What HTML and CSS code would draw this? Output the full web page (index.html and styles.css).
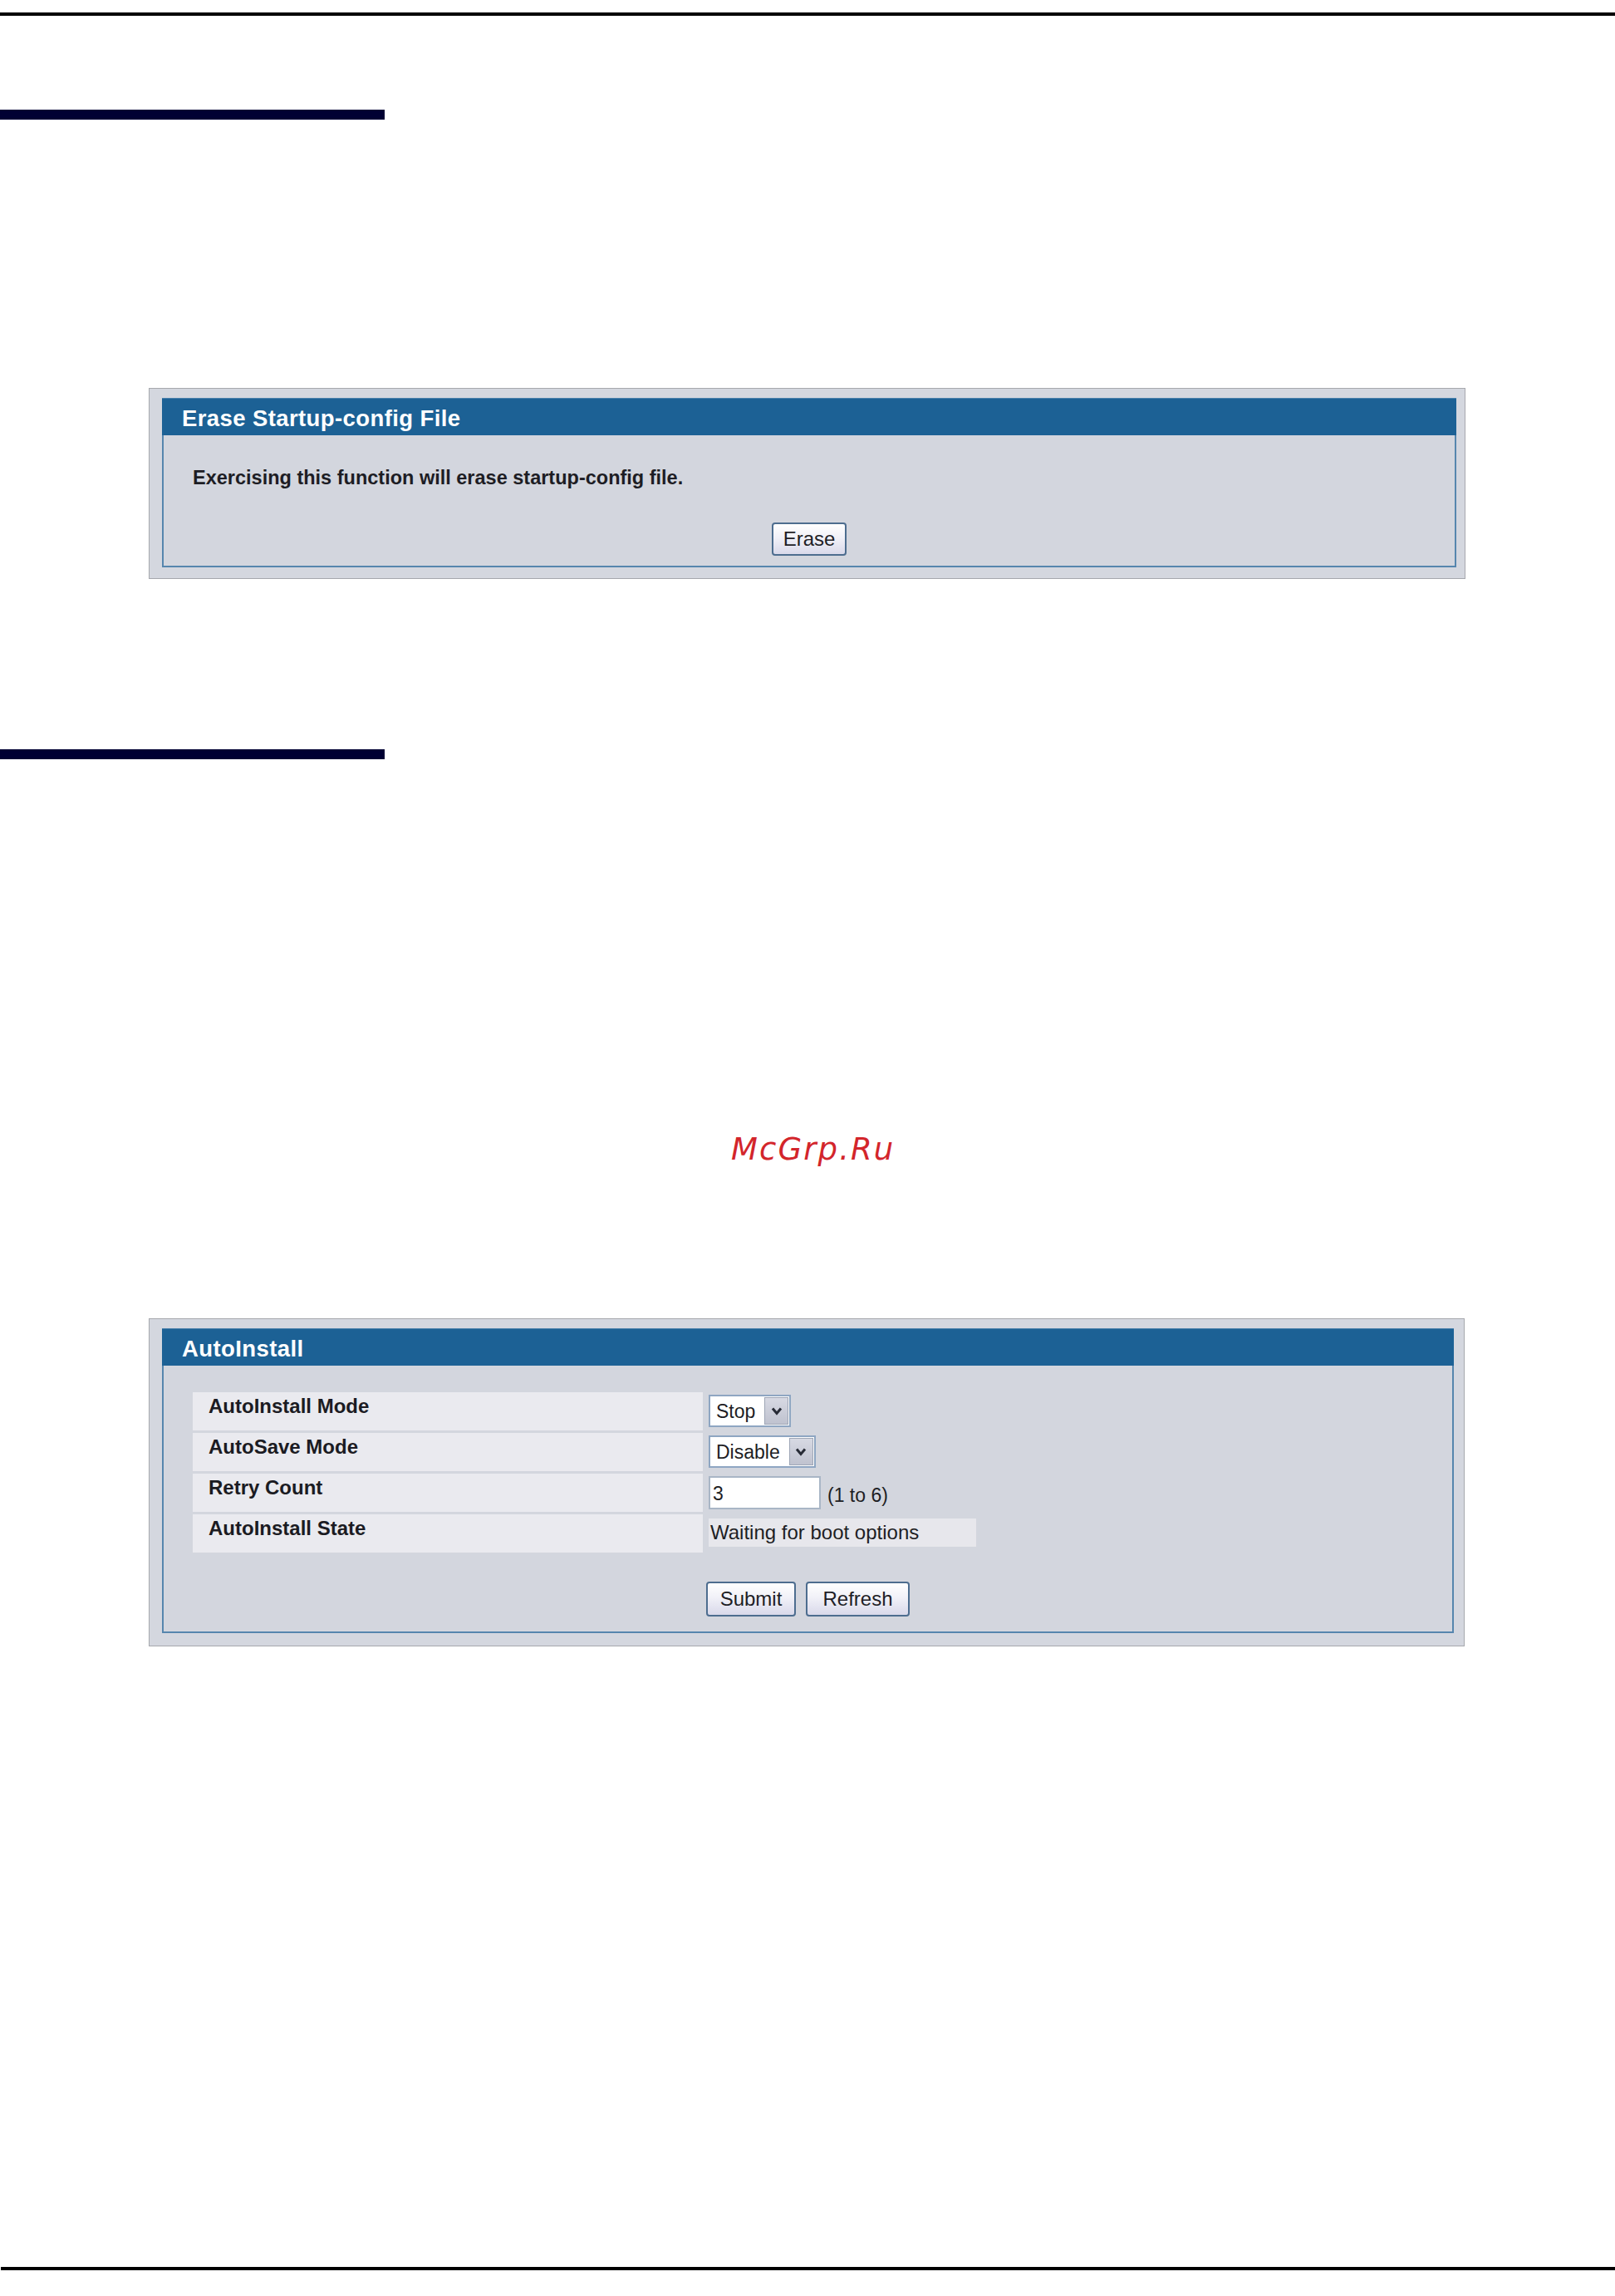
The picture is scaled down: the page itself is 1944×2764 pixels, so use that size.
FILE: index.html
```html
<!DOCTYPE html>
<html lang="en">
<head>
<meta charset="utf-8">
<title>Erase Startup-config File / AutoInstall</title>
<link rel="stylesheet" href="styles.css">
</head>
<body>
<div class="page">
  <div class="rule rule-top"></div>
  <div class="section-bar bar-first"></div>

  <div class="panel panel-erase">
    <div class="box">
      <div class="box-head">Erase Startup-config File</div>
      <div class="box-body erase-body">
        <p class="notice">Exercising this function will erase startup-config file.</p>
        <div class="actions actions-erase">
          <button class="btn btn-erase" type="button">Erase</button>
        </div>
      </div>
    </div>
  </div>

  <div class="section-bar bar-second"></div>

  <div class="watermark">McGrp.Ru</div>

  <div class="panel panel-auto">
    <div class="box">
      <div class="box-head">AutoInstall</div>
      <div class="box-body auto-body">
        <div class="form-grid">
          <div class="label-cell">AutoInstall Mode</div>
          <div class="value-cell">
            <span class="select">
              <span class="select-text">Stop</span>
              <span class="select-arrow"><svg viewBox="0 0 14 11" width="14" height="11"><polyline points="2,2.5 7,8.5 12,2.5" fill="none" stroke="#272b36" stroke-width="3" stroke-linejoin="miter"/></svg></span>
            </span>
          </div>

          <div class="label-cell">AutoSave Mode</div>
          <div class="value-cell">
            <span class="select">
              <span class="select-text">Disable</span>
              <span class="select-arrow"><svg viewBox="0 0 14 11" width="14" height="11"><polyline points="2,2.5 7,8.5 12,2.5" fill="none" stroke="#272b36" stroke-width="3" stroke-linejoin="miter"/></svg></span>
            </span>
          </div>

          <div class="label-cell">Retry Count</div>
          <div class="value-cell value-retry">
            <span class="text-input">3</span>
            <span class="range-hint">(1 to 6)</span>
          </div>

          <div class="label-cell">AutoInstall State</div>
          <div class="value-cell">
            <div class="state-box">Waiting for boot options</div>
          </div>
        </div>
        <div class="actions actions-auto">
          <button class="btn btn-submit" type="button">Submit</button>
          <button class="btn btn-refresh" type="button">Refresh</button>
        </div>
      </div>
    </div>
  </div>

  <div class="rule rule-bottom"></div>
</div>
</body>
</html>
```

FILE: styles.css
```css
html, body {
  margin: 0;
  padding: 0;
  background: #ffffff;
}

.page {
  width: 1944px;
  display: flex;
  flex-direction: column;
  font-family: "Liberation Sans", Arial, sans-serif;
  color: #1c1c22;
}

/* horizontal rules */
.rule {
  height: 4px;
  background: #000000;
}
.rule-top {
  margin-top: 15px;
  width: 1944px;
}
.rule-bottom {
  margin-top: 747px;
  margin-left: 1px;
  width: 1943px;
}

.section-bar {
  width: 463px;
  height: 12px;
  background: #000033;
}
.bar-first {
  margin-top: 113px;
}
.bar-second {
  margin-top: 205px;
}

/* watermark */
.watermark {
  margin-top: 448px;
  padding-left: 880px;
  height: 44px;
  line-height: 44px;
  font-family: "DejaVu Sans", sans-serif;
  font-style: oblique;
  font-size: 37px;
  letter-spacing: 2.1px;
  color: #d3252b;
}

/* panels */
.panel {
  box-sizing: border-box;
  margin-left: 179px;
  background: #d4d7df;
  border: 1px solid #a6a8ad;
}
.panel-erase {
  margin-top: 323px;
  width: 1585px;
  padding: 11px 10px 13px 15px;
}
.panel-auto {
  margin-top: 181px;
  width: 1584px;
  padding: 11px 12px 15px 15px;
}

.box {
  display: flex;
  flex-direction: column;
}

.box-head {
  box-sizing: border-box;
  height: 45px;
  padding: 2px 0 0 24px;
  line-height: 43px;
  background: #1c6195;
  border-top: 1px solid #4a80ab;
  color: #ffffff;
  font-weight: bold;
  font-size: 27.5px;
  letter-spacing: 0.4px;
}

.box-body {
  background: #d3d6de;
  border: 2px solid #5686ae;
  border-top: none;
}

.erase-body {
  padding: 37px 0 12px 35px;
}

.notice {
  margin: 0;
  font-size: 23.5px;
  line-height: 28px;
  font-weight: bold;
  color: #1d1d24;
}

.actions {
  display: flex;
  justify-content: center;
  gap: 12px;
}
.actions-erase {
  margin-top: 40px;
  padding-right: 35px;
}
.actions-auto {
  margin-top: 35px;
  padding-right: 35px;
}

.btn {
  box-sizing: border-box;
  padding: 0;
  font-family: "Liberation Sans", Arial, sans-serif;
  font-size: 24px;
  color: #1e1e26;
  background: linear-gradient(#ffffff 0%, #f1f1f8 45%, #d9d9ea 100%);
  border: 2px solid #4d6d8f;
  border-radius: 4px;
  text-align: center;
}
.btn-erase {
  width: 90px;
  height: 40px;
}
.btn-submit {
  width: 108px;
  height: 42px;
}
.btn-refresh {
  width: 125px;
  height: 42px;
}

.auto-body {
  padding: 32px 0 18px 35px;
}

.form-grid {
  display: grid;
  grid-template-columns: 614px 340px;
  grid-auto-rows: 46px;
  column-gap: 3px;
  row-gap: 3px;
}

.label-cell {
  background: #eaeaef;
  padding: 3px 0 0 19px;
  font-size: 24px;
  line-height: 28px;
  font-weight: bold;
  color: #1b1b22;
}

.value-cell {
  display: flex;
  align-items: flex-start;
  padding: 3px 0 0 4px;
  font-size: 23px;
}

.select {
  box-sizing: border-box;
  display: inline-flex;
  align-items: center;
  height: 39px;
  background: #ffffff;
  border: 2px solid #8ea6c2;
  padding-left: 7px;
  padding-right: 1px;
}
.select-text {
  font-size: 23px;
  line-height: 28px;
  margin-right: 11px;
  color: #1e1e24;
}
.select-arrow {
  box-sizing: border-box;
  width: 29px;
  height: 33px;
  display: flex;
  align-items: center;
  justify-content: center;
  background: linear-gradient(#d7d9e3, #bfc2cf);
  border: 1px solid #9ea6b6;
}

.value-retry {
  align-items: flex-end;
  padding-top: 3px;
}
.text-input {
  box-sizing: border-box;
  width: 135px;
  height: 40px;
  align-self: flex-start;
  background: #ffffff;
  border: 2px solid #a9b6c6;
  padding: 5px 0 0 3px;
  font-size: 23px;
  line-height: 28px;
  color: #1e1e24;
}
.range-hint {
  margin-left: 8px;
  margin-bottom: 6px;
  font-size: 23px;
  line-height: 28px;
  color: #1e1e24;
}

.state-box {
  margin-top: 2px;
  width: 322px;
  height: 34px;
  background: #e7e7ec;
  padding-left: 2px;
  box-sizing: border-box;
  font-size: 24px;
  line-height: 34px;
  color: #1e1e24;
}
```
